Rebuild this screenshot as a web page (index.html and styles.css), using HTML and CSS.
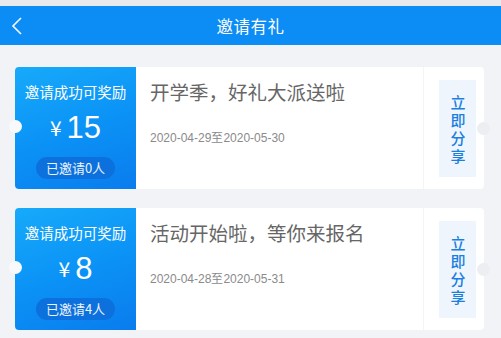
FILE: index.html
```html
<!DOCTYPE html>
<html lang="zh-CN">
<head>
  <meta charset="UTF-8" />
  <meta name="viewport" content="width=device-width, initial-scale=1.0" />
  <title>邀请有礼</title>
  <link rel="stylesheet" href="styles.css">
</head>
<body>

  <div class="status-strip"></div>

  <header class="top-bar">
    <svg class="back" width="14" height="20" viewBox="0 0 14 20">
      <polyline points="11,2 3,10 11,18" fill="none" stroke="#fff" stroke-width="1.6" />
    </svg>
    <h1>邀请有礼</h1>
  </header>

  <main class="list">
    <div class="card">
      <div class="prize">
        <div class="prize-label">邀请成功可奖励</div>
        <div class="prize-amount"><span class="yen">¥</span>15</div>
        <div class="invited">已邀请0人</div>
      </div>
      <div class="info">
        <div class="info-title">开学季，好礼大派送啦</div>
        <div class="info-date">2020-04-29至2020-05-30</div>
      </div>
      <div class="action">
        <button class="share-btn"><span class="share-text">立即分享</span></button>
      </div>
    </div>

    <div class="card">
      <div class="prize">
        <div class="prize-label">邀请成功可奖励</div>
        <div class="prize-amount"><span class="yen">¥</span>8</div>
        <div class="invited">已邀请4人</div>
      </div>
      <div class="info">
        <div class="info-title">活动开始啦，等你来报名</div>
        <div class="info-date">2020-04-28至2020-05-31</div>
      </div>
      <div class="action">
        <button class="share-btn"><span class="share-text">立即分享</span></button>
      </div>
    </div>
  </main>

</body>
</html>
```

FILE: styles.css
```css
:root {
  --page-bg: #f1f3f7;
  --bar-bg: #0b8df5;
  --title-text: #666;
  --date-text: #8a8a8a;
  --share-text: #1b7fe0;
  --share-bg: #eef5fd;
}

body {
  margin: 0;
  background-color: var(--page-bg);
  font-family: "Noto Sans CJK SC", "Noto Sans", sans-serif;
  overflow: hidden;
}

.status-strip {
  height: 6px;
  background-color: #e8e9ec;
}

.top-bar {
  position: relative;
  height: 39px;
  background-color: var(--bar-bg);
  display: flex;
  align-items: center;
  justify-content: center;
}

.top-bar h1 {
  margin: 0;
  font-size: 16.5px;
  font-weight: 400;
  color: #fff;
  letter-spacing: 0.5px;
}

.back {
  position: absolute;
  left: 10px;
  top: 10px;
}

.list {
  display: flex;
  flex-direction: column;
  gap: 19px;
  padding: 22px 17px 0 15px;
}

.card {
  position: relative;
  display: flex;
  height: 122px;
  background-color: #fff;
  border-radius: 4px;
}

.card::before,
.card::after {
  content: "";
  position: absolute;
  width: 13px;
  height: 13px;
  border-radius: 50%;
}

.card::before {
  left: -6px;
  top: 53px;
  background-color: #f8f9fb;
}

.card::after {
  right: -6px;
  top: 55px;
  background-color: #eceef2;
}

.prize {
  width: 121px;
  flex-shrink: 0;
  display: flex;
  flex-direction: column;
  align-items: center;
  border-radius: 4px 0 0 4px;
  background: linear-gradient(160deg, #17aafa 0%, #0b93f6 50%, #0a7cee 100%);
  color: #fff;
}

.prize-label {
  margin-top: 15px;
  font-size: 14.5px;
  line-height: 20px;
}

.prize-amount {
  margin-top: 7px;
  height: 36px;
  font-family: "Liberation Sans", Arial, sans-serif;
  font-size: 31px;
  line-height: 36px;
}

.yen {
  font-family: "Noto Sans CJK SC", sans-serif;
  font-size: 21px;
  margin-right: 5px;
  vertical-align: 2px;
}

.invited {
  margin-top: 12px;
  width: 79px;
  height: 22px;
  line-height: 22px;
  border-radius: 11px;
  background-color: #0c71dc;
  font-size: 13px;
  text-align: center;
  color: #eaf3ff;
}

.info {
  flex: 1;
  padding-left: 14px;
}

.info-title {
  margin-top: 12px;
  font-size: 19.5px;
  line-height: 26px;
  color: var(--title-text);
}

.info-date {
  margin-top: 25px;
  font-family: "Liberation Sans", Arial, sans-serif;
  font-size: 12px;
  line-height: 16px;
  color: var(--date-text);
}

.action {
  width: 61px;
  flex-shrink: 0;
  border-left: 1px solid #f3f4f7;
  padding: 13px 9px 0 15px;
  box-sizing: border-box;
}

.share-btn {
  display: flex;
  align-items: center;
  justify-content: center;
  width: 37px;
  height: 97px;
  border: none;
  padding: 0;
  background-color: var(--share-bg);
  cursor: pointer;
}

.share-text {
  writing-mode: vertical-rl;
  letter-spacing: 3px;
  margin-top: 4px;
  color: var(--share-text);
  font-family: "Noto Sans CJK SC", sans-serif;
  font-size: 15px;
  font-weight: 500;
  line-height: 18px;
}
```
